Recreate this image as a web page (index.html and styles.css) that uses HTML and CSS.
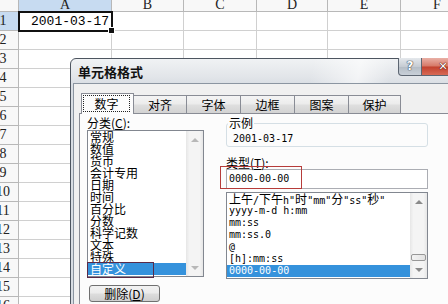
FILE: index.html
```html
<!DOCTYPE html>
<html lang="zh-CN">
<head>
<meta charset="utf-8">
<title>单元格格式</title>
<link rel="stylesheet" href="styles.css">
</head>
<body>
<div class="sheet">
  <div class="ch"></div><div class="ch sel">A</div><div class="ch">B</div><div class="ch">C</div><div class="ch">D</div><div class="ch">E</div><div class="ch">F</div>
  <div class="rh sel">1</div><div class="a1">2001-03-17</div><div></div><div></div><div></div><div></div><div></div>
  <div class="rh">2</div><div></div><div></div><div></div><div></div><div></div><div></div>
  <div class="rh">3</div><div></div><div></div><div></div><div></div><div></div><div></div>
  <div class="rh">4</div><div></div><div></div><div></div><div></div><div></div><div></div>
  <div class="rh">5</div><div></div><div></div><div></div><div></div><div></div><div></div>
  <div class="rh">6</div><div></div><div></div><div></div><div></div><div></div><div></div>
  <div class="rh">7</div><div></div><div></div><div></div><div></div><div></div><div></div>
  <div class="rh">8</div><div></div><div></div><div></div><div></div><div></div><div></div>
  <div class="rh">9</div><div></div><div></div><div></div><div></div><div></div><div></div>
  <div class="rh">10</div><div></div><div></div><div></div><div></div><div></div><div></div>
  <div class="rh">11</div><div></div><div></div><div></div><div></div><div></div><div></div>
  <div class="rh">12</div><div></div><div></div><div></div><div></div><div></div><div></div>
  <div class="rh">13</div><div></div><div></div><div></div><div></div><div></div><div></div>
  <div class="rh">14</div><div></div><div></div><div></div><div></div><div></div><div></div>
  <div class="rh">15</div><div></div><div></div><div></div><div></div><div></div><div></div>
  <div class="rh">16</div><div></div><div></div><div></div><div></div><div></div><div></div>
</div>

<div class="dialog">
  <div class="titlebar">
    <span class="title">单元格格式</span>
    <div class="caption-btns">
      <span class="cbtn help">?</span>
      <span class="cbtn close">✕</span>
    </div>
  </div>
  <div class="client">
    <div class="tabs">
      <span class="tab active"><span class="focus">数字</span></span>
      <span class="tab t2">对齐</span>
      <span class="tab t3">字体</span>
      <span class="tab t4">边框</span>
      <span class="tab t5">图案</span>
      <span class="tab t6">保护</span>
    </div>
    <div class="page">
      <div class="col-left">
        <div class="lbl">分类(<u>C</u>):</div>
        <div class="listbox cat">
          <div class="items">
            <div>常规</div>
            <div>数值</div>
            <div>货币</div>
            <div>会计专用</div>
            <div>日期</div>
            <div>时间</div>
            <div>百分比</div>
            <div>分数</div>
            <div>科学记数</div>
            <div>文本</div>
            <div>特殊</div>
            <div class="selected">自定义</div>
          </div>
          <div class="vscroll disabled">
            <span class="sbtn"><i class="arr up"></i></span>
            <span class="track"></span>
            <span class="sbtn"><i class="arr down"></i></span>
          </div>
        </div>
        <button class="btn">删除(<u>D</u>)</button>
      </div>
      <div class="col-right">
        <fieldset class="sample">
          <legend>示例</legend>
          <div class="sample-val">2001-03-17</div>
        </fieldset>
        <div class="lbl lbl2">类型(<u>T</u>):</div>
        <div class="input">0000-00-00</div>
        <div class="listbox fmt">
          <div class="items mono">
            <div><span class="cj">上午</span>/<span class="cj">下午</span>h"<span class="cj">时</span>"mm"<span class="cj">分</span>"ss"<span class="cj">秒</span>"</div>
            <div>yyyy-m-d h:mm</div>
            <div>mm:ss</div>
            <div>mm:ss.0</div>
            <div>@</div>
            <div>[h]:mm:ss</div>
            <div class="selected">0000-00-00</div>
          </div>
          <div class="vscroll">
            <span class="sbtn"><i class="arr up"></i></span>
            <span class="track"><span class="thumb"></span></span>
            <span class="sbtn"><i class="arr down"></i></span>
          </div>
        </div>
      </div>
    </div>
  </div>
</div>

<div class="mark mark-cat"></div>
<div class="mark mark-input"></div>
</body>
</html>
```
FILE: styles.css
```css
html, body {
  margin: 0;
  padding: 0;
}
body {
  width: 448px;
  height: 304px;
  overflow: hidden;
  position: relative;
  background: #fff;
  font-family: "Noto Sans CJK SC", sans-serif;
  color: #000;
}

/* ---------- spreadsheet ---------- */
.sheet {
  display: grid;
  grid-template-columns: 31px 93px 72px 73px 71px 73px 73px;
  grid-auto-rows: 19px;
  margin: -7px 0 0 -12px;
  font-family: "Liberation Serif", serif;
  font-size: 14px;
  color: #222;
}
.sheet > div {
  box-sizing: border-box;
  border-right: 1px solid #d0d0d0;
  border-bottom: 1px solid #d0d0d0;
}
.sheet .ch,
.sheet .rh {
  background: #f8f8f8;
  border-color: #b8b8b8;
  text-align: center;
}
.sheet .ch {
  line-height: 24px;
}
.sheet .rh {
  line-height: 18px;
}
.sheet .sel {
  background: #c7dbf1;
}
.sheet .a1 {
  position: relative;
  text-align: right;
  padding-right: 2px;
  font-family: "Liberation Mono", monospace;
  font-size: 13px;
  line-height: 19px;
  color: #000;
}
.sheet .a1::after {
  content: "";
  position: absolute;
  left: -1px;
  top: -1px;
  right: -2px;
  bottom: -2px;
  border: 2px solid #111;
}
.sheet .a1::before {
  content: "";
  position: absolute;
  right: -4px;
  bottom: -4px;
  width: 5px;
  height: 5px;
  background: #111;
  border: 1px solid #fff;
  z-index: 1;
}

/* ---------- dialog ---------- */
.dialog {
  position: absolute;
  left: 70px;
  top: 58px;
  width: 402px;
  height: 262px;
  box-sizing: border-box;
  border: 1px solid #4d5560;
  border-radius: 6px 6px 0 0;
  padding: 0 2px;
  background: linear-gradient(180deg, #f0f2f4 0, #e2e5e9 18px, #d8dde3 26px, #d8dde3 100%);
}
.titlebar {
  display: flex;
  justify-content: space-between;
  align-items: flex-start;
  height: 24px;
  background: linear-gradient(100deg, rgba(255,255,255,0) 60%, rgba(255,255,255,0.6) 72%, rgba(255,255,255,0) 80%);
}
.title {
  padding-left: 5px;
  font-size: 13px;
  font-weight: bold;
  line-height: 26px;
  color: #111;
}
.caption-btns {
  display: flex;
  margin-top: -1px;
  margin-right: 4px;
}
.cbtn {
  height: 18px;
  box-sizing: border-box;
  border: 1px solid #5d6672;
  border-top: none;
  text-align: center;
  line-height: 17px;
  font-family: "DejaVu Sans", sans-serif;
  font-weight: bold;
  color: #fff;
}
.help {
  width: 24px;
  border-radius: 0 0 0 4px;
  background: linear-gradient(180deg, #e4e8ec, #c6ccd3 50%, #b4bcc5 51%, #c9d0d8);
  font-size: 12px;
  text-shadow: 0 0 1px #3d4550, 0 0 1px #3d4550, 0 0 1px #3d4550;
}
.close {
  width: 43px;
  border-left: none;
  border-radius: 0 0 4px 0;
  background: linear-gradient(180deg, #e9b0a6, #d67867 48%, #c2412e 52%, #d86a55);
  font-size: 11px;
  text-shadow: 0 0 1px #5a1a12, 0 0 1px #5a1a12, 0 0 1px #5a1a12;
}

.client {
  height: 240px;
  border: 1px solid #8b95a1;
  background: #f0f0f0;
  padding: 9px 0 0 5px;
}

/* tabs */
.tabs {
  display: flex;
  align-items: flex-end;
  height: 20px;
  margin-left: 2px;
  font-size: 12px;
}
.tab {
  box-sizing: border-box;
  height: 18px;
  margin-left: -1px;
  border: 1px solid #898c95;
  border-bottom: none;
  text-align: center;
  line-height: 17px;
  background: linear-gradient(180deg, #f4f4f4, #ececec 45%, #dedede 55%, #d3d3d3);
}
.tab.active {
  margin-left: 0;
  position: relative;
  z-index: 2;
  width: 53px;
  height: 21px;
  margin-bottom: -1px;
  padding: 1px 3px 0 1px;
  background: #fcfcfc;
}
.tab .focus {
  display: block;
  height: 17px;
  box-sizing: border-box;
  border: 1px dotted #222;
  line-height: 15px;
}
.t2 { width: 54px; }
.t3 { width: 55px; }
.t4 { width: 55px; }
.t5 { width: 55px; }
.t6 { width: 53px; }

.page {
  display: flex;
  gap: 22px;
  height: 200px;
  border: 1px solid #898c95;
  background: #fcfcfc;
  padding: 2px 0 0 7px;
  font-size: 12px;
}
.col-left {
  width: 117px;
  display: flex;
  flex-direction: column;
  align-items: flex-start;
}
.col-right {
  width: 202px;
}
.lbl {
  line-height: 14px;
  height: 14px;
  white-space: nowrap;
}
.lbl2 {
  margin-top: 9px;
  line-height: 13px;
  height: 13px;
}

/* list boxes */
.listbox {
  display: flex;
  box-sizing: border-box;
  border: 1px solid #828790;
  background: #fff;
}
.cat {
  width: 117px;
  height: 147px;
}
.fmt {
  width: 202px;
  height: 87px;
  margin-top: 3px;
}
.items {
  flex: 1;
  min-width: 0;
}
.items > div {
  height: 12px;
  line-height: 12px;
  padding-left: 2px;
  white-space: nowrap;
  overflow: hidden;
}
.items > .selected {
  background: #3592dc;
  color: #fff;
}
.mono {
  font-family: "DejaVu Sans Mono", monospace;
  font-size: 10px;
}
.mono .cj {
  font-family: "Noto Sans CJK SC", sans-serif;
  font-size: 12px;
}
.vscroll {
  width: 17px;
  display: flex;
  flex-direction: column;
  background: linear-gradient(90deg, #e6e6e6, #f4f4f4 20%, #f4f4f4 80%, #e6e6e6);
}
.sbtn {
  height: 17px;
  display: flex;
  align-items: center;
  justify-content: center;
}
.track {
  flex: 1;
  display: flex;
  flex-direction: column;
  justify-content: flex-end;
}
.thumb {
  height: 7px;
  margin: 0 1px;
  box-sizing: border-box;
  border: 1px solid #979797;
  border-radius: 2px;
  background: linear-gradient(90deg, #f3f3f3, #e2e2e2);
}
.arr {
  width: 0;
  height: 0;
  border-left: 4px solid transparent;
  border-right: 4px solid transparent;
}
.arr.up {
  border-bottom: 4px solid #8a8a8a;
}
.arr.down {
  border-top: 4px solid #8a8a8a;
}
.disabled .arr.up {
  border-bottom-color: #b8b8b8;
}
.disabled .arr.down {
  border-top-color: #b8b8b8;
}

/* button */
.btn {
  margin: 8px 0 0 2px;
  width: 71px;
  height: 17px;
  padding: 0;
  box-sizing: border-box;
  border: 1px solid #707070;
  border-radius: 3px;
  background: linear-gradient(180deg, #f2f2f2, #ebebeb 48%, #dddddd 52%, #cfcfcf);
  font-family: "Noto Sans CJK SC", sans-serif;
  font-size: 12px;
  line-height: 14px;
  color: #000;
}

/* sample group */
.sample {
  margin: 1px 0 0 0;
  padding: 0 6px 1px 6px;
  min-width: 0;
  border: 1px solid #d5dfe5;
  border-radius: 3px;
}
.sample legend {
  margin-left: -5px;
  padding: 0 1px;
  line-height: 12px;
  font-size: 12px;
}
.sample-val {
  margin-top: 4px;
  line-height: 12px;
  font-family: "DejaVu Sans Mono", monospace;
  font-size: 10px;
}
.input {
  box-sizing: border-box;
  height: 20px;
  border: 1px solid #abadb3;
  background: #fff;
  padding-left: 2px;
  line-height: 18px;
  font-family: "DejaVu Sans Mono", monospace;
  font-size: 10px;
}

/* annotation boxes */
.mark {
  position: absolute;
  box-sizing: border-box;
}
.mark-cat {
  left: 87px;
  top: 262px;
  width: 67px;
  height: 16px;
  border: 1px solid #5a2a48;
}
.mark-input {
  left: 220px;
  top: 166px;
  width: 82px;
  height: 23px;
  border: 1px solid #b63c3a;
}
```
